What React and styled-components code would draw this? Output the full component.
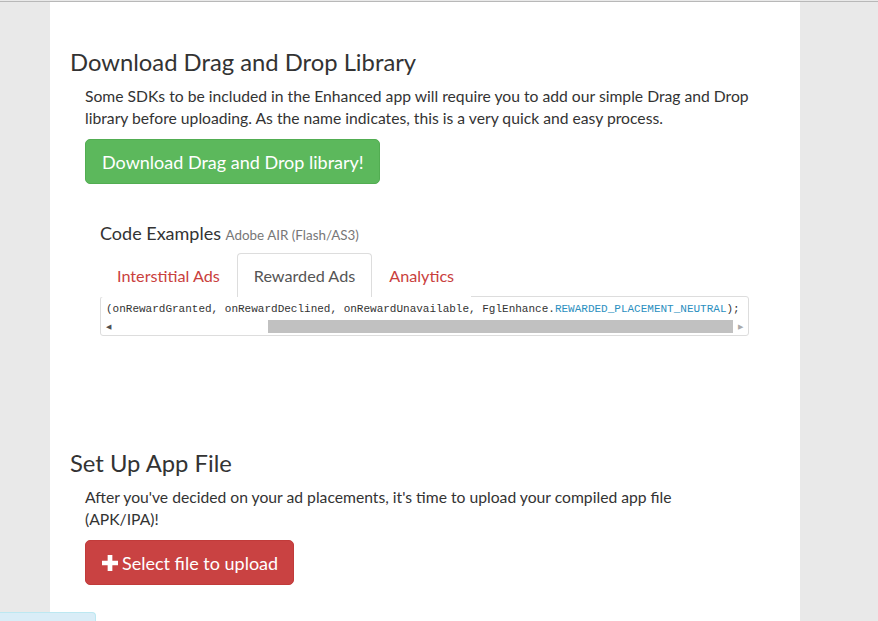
import React from 'react';
import styled, { createGlobalStyle } from 'styled-components';

const GlobalStyle = createGlobalStyle`
  html, body {
    margin: 0;
    padding: 0;
    background: #e9e9e9;
    font-family: Lato, "Open Sans", Arial, sans-serif;
    color: #333;
  }
`;

const TopRule = styled.div`
  height: 1px;
  margin-top: 1px;
  background: #b8b8b8;
`;

const Page = styled.div`
  display: flex;
  height: 619px;
  overflow: hidden;
  position: relative;
`;

const Panel = styled.main`
  width: 750px;
  margin-left: 50px;
  background: #fff;
  padding: 0 50px 0 20px;
  box-sizing: border-box;
`;

const Section = styled.section`
  margin-top: ${(p) => p.$top}px;
`;

const Heading = styled.h3`
  font-size: 23.8px;
  font-weight: 400;
  line-height: 26px;
  margin: 0 0 11px;
  color: #333;
`;

const Body = styled.div`
  padding-left: 15px;
`;

const Text = styled.p`
  font-size: 15.7px;
  line-height: 21.5px;
  margin: 0 0 10px;
  color: #333;
`;

const Button = styled.button`
  display: inline-flex;
  align-items: center;
  gap: 4px;
  height: 45px;
  padding: 0 15px 0 16px;
  border: 1px solid ${(p) => (p.$tone === 'danger' ? '#c13b3a' : '#52ad52')};
  border-radius: 5px;
  background: ${(p) => (p.$tone === 'danger' ? '#c94242' : '#5cb85c')};
  color: #fff;
  font-family: Lato, Arial, sans-serif;
  font-size: 18px;
  cursor: pointer;
`;

const CodeBlock = styled.div`
  margin: 37px 0 0 15px;
`;

const CodeTitle = styled.div`
  font-size: 18px;
  line-height: 24px;
  color: #333;
  margin-bottom: 6px;
  small {
    font-size: 13.4px;
    color: #777;
  }
`;

const Tabs = styled.ul`
  display: flex;
  list-style: none;
  margin: 0;
  padding: 0;
`;

const Tab = styled.li`
  padding: 10px 16px;
  font-size: 16.2px;
  line-height: 23px;
  border: 1px solid ${(p) => (p.$active ? '#ddd' : 'transparent')};
  border-bottom: none;
  border-radius: 4px 4px 0 0;
  color: ${(p) => (p.$active ? '#555' : '#c9403d')};
  background: #fff;
  margin-bottom: -1px;
  position: relative;
  z-index: 1;
`;

const CodeBox = styled.div`
  width: 649px;
  border: 1px solid #ddd;
  border-radius: 3px;
  box-sizing: border-box;
  overflow: hidden;
`;

const CodeLine = styled.pre`
  margin: 0;
  padding: 3px 5px 0;
  height: 18px;
  font-family: Consolas, "Liberation Mono", monospace;
  font-size: 11px;
  line-height: 18px;
  color: #333;
  white-space: pre;
  overflow: hidden;
`;

const Const = styled.span`
  color: #2b8fc0;
`;

const Scrollbar = styled.div`
  display: flex;
  align-items: center;
  height: 15px;
  margin: 1px 0 1px;
`;

const Arrow = styled.span`
  width: 15px;
  display: flex;
  justify-content: center;
  font-size: 7px;
  color: ${(p) => (p.$dim ? '#aaa' : '#505050')};
`;

const Track = styled.div`
  flex: 1;
  height: 15px;
  display: flex;
  justify-content: flex-end;
`;

const Thumb = styled.div`
  width: 465px;
  height: 13px;
  margin-top: 1px;
  background: #c1c1c1;
`;

const Alert = styled.div`
  position: absolute;
  left: 0;
  bottom: 0;
  width: 95px;
  height: 8px;
  background: #d9edf7;
  border: 1px solid #bce8f1;
  border-left: none;
  border-bottom: none;
  border-top-right-radius: 4px;
`;

const Plus = () => (
  <svg width="16" height="16" viewBox="0 0 17 17" aria-hidden="true">
    <path d="M6 0h5v6h6v5h-6v6H6v-6H0V6h6z" fill="#fff" />
  </svg>
);

export default function App() {
  return (
    <>
      <GlobalStyle />
      <TopRule />
      <Page>
        <Panel>
          <Section $top={47}>
            <Heading>Download Drag and Drop Library</Heading>
            <Body>
              <Text>
                Some SDKs to be included in the Enhanced app will require you to add our simple Drag and Drop
                library before uploading. As the name indicates, this is a very quick and easy process.
              </Text>
              <Button>Download Drag and Drop library!</Button>
              <CodeBlock>
                <CodeTitle>
                  Code Examples <small>Adobe AIR (Flash/AS3)</small>
                </CodeTitle>
                <Tabs>
                  <Tab>Interstitial Ads</Tab>
                  <Tab $active>Rewarded Ads</Tab>
                  <Tab>Analytics</Tab>
                </Tabs>
                <CodeBox>
                  <CodeLine>
                    (onRewardGranted, onRewardDeclined, onRewardUnavailable, FglEnhance.<Const>REWARDED_PLACEMENT_NEUTRAL</Const>);
                  </CodeLine>
                  <Scrollbar>
                    <Arrow>◀</Arrow>
                    <Track>
                      <Thumb />
                    </Track>
                    <Arrow $dim>▶</Arrow>
                  </Scrollbar>
                </CodeBox>
              </CodeBlock>
            </Body>
          </Section>
          <Section $top={114}>
            <Heading>Set Up App File</Heading>
            <Body>
              <Text>
                After you've decided on your ad placements, it's time to upload your compiled app file
                <br />
                (APK/IPA)!
              </Text>
              <Button $tone="danger">
                <Plus />
                Select file to upload
              </Button>
            </Body>
          </Section>
        </Panel>
        <Alert />
      </Page>
    </>
  );
}
